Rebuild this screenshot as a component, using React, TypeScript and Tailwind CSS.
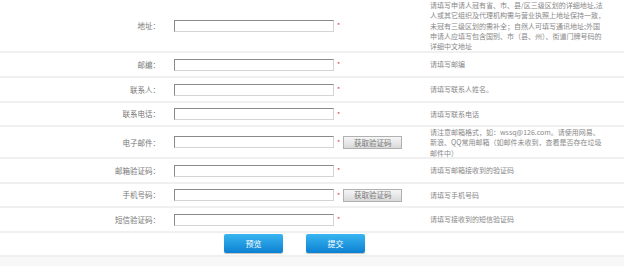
import React from "react";

const cjk = "font-['Noto_Sans_CJK_SC','Noto_Sans',sans-serif]";

type Row = {
  label: string;
  h: string;
  hint: string[];
  code?: boolean;
};

const rows: Row[] = [
  {
    label: "地址：",
    h: "h-[53px]",
    hint: [
      "请填写申请人冠有省、市、县/区三级区划的详细地址,法",
      "人或其它组织及代理机构需与营业执照上地址保持一致，",
      "未冠有三级区划的需补全；自然人可填写通讯地址;外国",
      "申请人应填写包含国别、市（县、州）、街道门牌号码的",
      "详细中文地址",
    ],
  },
  { label: "邮编：", h: "h-[25px]", hint: ["请填写邮编"] },
  { label: "联系人：", h: "h-[25px]", hint: ["请填写联系人姓名。"] },
  { label: "联系电话：", h: "h-[24px]", hint: ["请填写联系电话"] },
  {
    label: "电子邮件：",
    h: "h-[32px]",
    code: true,
    hint: [
      "请注意邮箱格式，如：wssq@126.com。请使用网易、",
      "新浪、QQ常用邮箱（如邮件未收到，查看是否存在垃圾",
      "邮件中）",
    ],
  },
  { label: "邮箱验证码：", h: "h-[25px]", hint: ["请填写邮箱接收到的验证码"] },
  { label: "手机号码：", h: "h-[24px]", code: true, hint: ["请填写手机号码"] },
  { label: "短信验证码：", h: "h-[25px]", hint: ["请填写接收到的短信验证码"] },
];

function FormRow({ row }: { row: Row }) {
  return (
    <div
      className={`grid grid-cols-[174px_256px_1fr] items-center border-b-2 border-[#f0f0f0] ${row.h}`}
    >
      <div className="pr-[14px] text-right text-[7.5px] leading-none text-[#777]">
        {row.label}
      </div>
      <div className="flex items-center">
        <input
          className="h-[12px] w-[160px] border border-t-[#8a8a8a] border-l-[#8a8a8a] border-r-[#d4d4d4] border-b-[#d4d4d4] bg-white outline-none"
          type="text"
        />
        <span className="ml-[3px] text-[7px] leading-none text-[#e0404a]">*</span>
        {row.code && (
          <button className="ml-[3px] h-[13px] w-[59px] border border-[#b0b0b0] bg-gradient-to-b from-[#f6f6f6] to-[#d9d9d9] text-[7.5px] leading-none text-[#777]">
            获取验证码
          </button>
        )}
      </div>
      <div className="whitespace-nowrap text-[7px] leading-[10.3px] text-[#888]">
        {row.hint.map((l, i) => (
          <div key={i}>{l}</div>
        ))}
      </div>
    </div>
  );
}

export default function App() {
  return (
    <div className={`h-[266px] w-[640px] overflow-hidden bg-white ${cjk}`}>
      <div className="w-[624px]">
        {rows.map((r) => (
          <FormRow key={r.label} row={r} />
        ))}
        <div className="flex h-[24px] items-start gap-[23px] border-b-2 border-[#f0f0f0] pl-[224px] pt-[1px]">
          <button className="h-[19px] w-[59px] rounded-[2px] bg-gradient-to-b from-[#38b6f0] to-[#0a80d2] text-[8px] leading-none text-white shadow-[0_1px_1px_rgba(0,0,0,0.25)]">
            预览
          </button>
          <button className="h-[19px] w-[59px] rounded-[2px] bg-gradient-to-b from-[#38b6f0] to-[#0a80d2] text-[8px] leading-none text-white shadow-[0_1px_1px_rgba(0,0,0,0.25)]">
            提交
          </button>
        </div>
        <div className="h-[20px] bg-[#f7f7f7]" />
      </div>
    </div>
  );
}
